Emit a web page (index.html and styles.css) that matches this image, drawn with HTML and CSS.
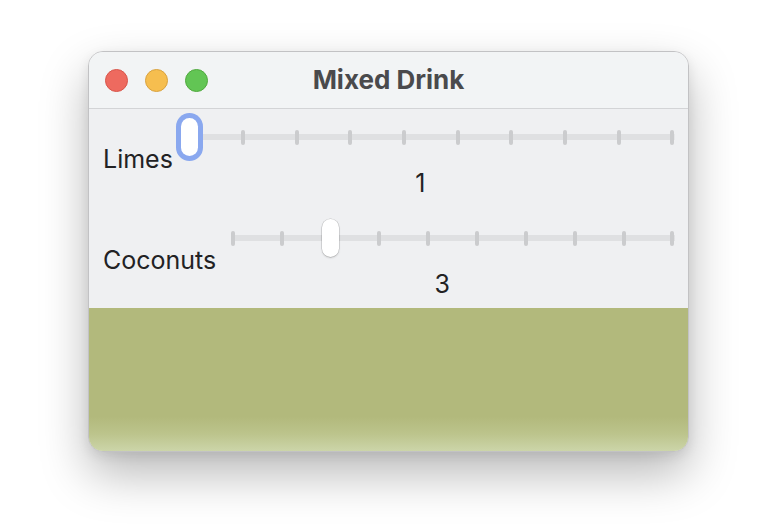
FILE: index.html
```html
<!DOCTYPE html>
<html>
<head>
<meta charset="utf-8">
<link rel="stylesheet" href="styles.css">
</head>
<body>
<div class="window">
  <div class="titlebar">
    <div class="lights">
      <span class="light red"></span>
      <span class="light yellow"></span>
      <span class="light green"></span>
    </div>
    <div class="title">Mixed Drink</div>
  </div>
  <div class="content">
    <div class="row">
      <div class="label">Limes</div>
      <div class="control">
        <div class="slider">
          <div class="ticks">
            <i></i><i></i><i></i><i></i><i></i><i></i><i></i><i></i><i></i><i></i>
          </div>
          <div class="thumb focused" style="left: calc((100% - 17px) * 0)"></div>
        </div>
        <div class="value">1</div>
      </div>
    </div>
    <div class="row">
      <div class="label">Coconuts</div>
      <div class="control">
        <div class="slider">
          <div class="ticks">
            <i></i><i></i><i></i><i></i><i></i><i></i><i></i><i></i><i></i><i></i>
          </div>
          <div class="thumb" style="left: calc((100% - 17px) * 0.2222)"></div>
        </div>
        <div class="value">3</div>
      </div>
    </div>
  </div>
  <div class="swatch"></div>
</div>
</body>
</html>
```

FILE: styles.css
```css
html, body {
  margin: 0;
  padding: 0;
  background: #ffffff;
}

body {
  width: 776px;
  height: 526px;
  overflow: hidden;
  font-family: "Inter", "Liberation Sans", sans-serif;
}

.window {
  margin: 51px 0 0 88px;
  width: 599px;
  height: 399px;
  border: 1px solid #c2c2c4;
  border-radius: 15px;
  overflow: hidden;
  display: flex;
  flex-direction: column;
  background: #eff0f2;
  box-shadow: 0 22px 48px rgba(0, 0, 0, 0.28), 0 4px 12px rgba(0, 0, 0, 0.08);
}

.titlebar {
  height: 56px;
  flex: none;
  background: #f2f4f5;
  border-bottom: 1px solid #d3d4d6;
  display: flex;
  align-items: center;
  position: relative;
}

.lights {
  display: flex;
  gap: 17px;
  padding-left: 16px;
  margin-top: 1px;
}

.light {
  width: 21px;
  height: 21px;
  border-radius: 50%;
  border: 1px solid;
}

.red { background: #ee6a5f; border-color: #d8554a; }
.yellow { background: #f6be4f; border-color: #d9a23f; }
.green { background: #62c554; border-color: #50a93e; }

.title {
  position: absolute;
  left: 0;
  right: 0;
  top: 0;
  bottom: 0;
  display: flex;
  align-items: center;
  justify-content: center;
  font-size: 26px;
  font-weight: 700;
  color: #4a4a4c;
  padding-bottom: 1px;
}

.content {
  flex: none;
  padding: 8px 7px 9px 14px;
  display: flex;
  flex-direction: column;
  gap: 20px;
  color: #222224;
}

.row {
  display: flex;
  align-items: flex-start;
}

.label {
  font-size: 25px;
  line-height: 30px;
  margin-top: 27px;
}

.control {
  flex: 1;
  display: flex;
  flex-direction: column;
}

.slider {
  position: relative;
  height: 40px;
  margin-left: 8px;
  display: flex;
  align-items: center;
}

.ticks {
  flex: 1;
  height: 15px;
  margin: 0 6.5px;
  display: flex;
  justify-content: space-between;
  background: linear-gradient(#dfe0e2, #dfe0e2) center / 100% 6px no-repeat;
}

.ticks i {
  width: 4px;
  height: 15px;
  border-radius: 2px;
  background: #cbccce;
}

.thumb {
  position: absolute;
  top: 1px;
  width: 17px;
  height: 38px;
  border-radius: 9px;
  background: #ffffff;
  box-shadow: 0 0 0 0.5px rgba(0, 0, 0, 0.18), 0 1px 2px rgba(0, 0, 0, 0.18);
}

.thumb.focused {
  box-shadow: 0 0 0 5px #8aa8ef;
}

.value {
  font-size: 25px;
  line-height: 30px;
  margin-top: 11px;
  padding-right: 13px;
  text-align: center;
}

.swatch {
  flex: 1;
  background: linear-gradient(to bottom, #b2b97c 0%, #b2b97c 76%, #bcc48c 88%, #ccd5a9 100%);
}
```
